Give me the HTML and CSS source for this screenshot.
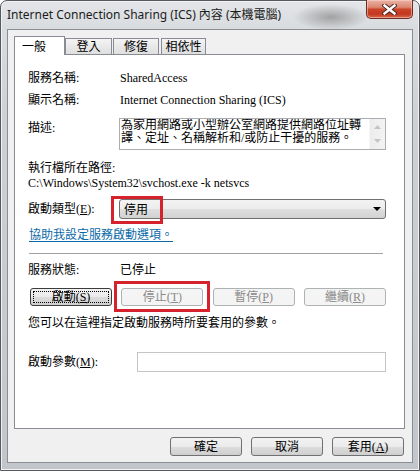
FILE: index.html
```html
<!DOCTYPE html>
<html lang="zh-Hant">
<head>
<meta charset="utf-8">
<title>Internet Connection Sharing (ICS) 內容</title>
<link rel="stylesheet" href="styles.css">
</head>
<body>
<div class="window">
  <div class="titlebar">
    <span class="title">Internet Connection Sharing (ICS) 內容 (本機電腦)</span>
    <div class="close">
      <svg width="15" height="11" viewBox="0 0 15 11"><path d="M2.5 1.5 L12.5 9.5 M12.5 1.5 L2.5 9.5" stroke="#4a2a22" stroke-width="4.4" stroke-linecap="square" fill="none"/><path d="M2.5 1.5 L12.5 9.5 M12.5 1.5 L2.5 9.5" stroke="#ffffff" stroke-width="2.4" stroke-linecap="square" fill="none"/></svg>
    </div>
  </div>
  <div class="client">
    <div class="tabs">
      <div class="tab active">一般</div>
      <div class="tab t2">登入</div>
      <div class="tab t3">修復</div>
      <div class="tab t4">相依性</div>
    </div>
    <div class="panel">
      <div class="row r1"><span class="label">服務名稱:</span><span class="val">SharedAccess</span></div>
      <div class="row r2"><span class="label">顯示名稱:</span><span class="val">Internet Connection Sharing (ICS)</span></div>
      <div class="row r3">
        <span class="label desc-label">描述:</span>
        <div class="desc">
          <div class="desc-text">為家用網路或小型辦公室網路提供網路位址轉<br>譯、定址、名稱解析和/或防止干擾的服務。</div>
          <div class="scroll">
            <svg width="7" height="4" viewBox="0 0 7 4"><path d="M0 4 L3.5 0 L7 4 Z" fill="#c4c4c4"/></svg>
            <svg width="7" height="4" viewBox="0 0 7 4"><path d="M0 0 L3.5 4 L7 0 Z" fill="#c4c4c4"/></svg>
          </div>
        </div>
      </div>
      <div class="line exec">執行檔所在路徑:</div>
      <div class="line path">C:\Windows\System32\svchost.exe -k netsvcs</div>
      <div class="row r6">
        <span class="label">啟動類型(<u>E</u>):</span>
        <div class="select"><span>停用</span><svg width="8" height="4" viewBox="0 0 8 4"><path d="M0 0 L8 0 L4 4 Z" fill="#000"/></svg></div>
      </div>
      <div class="line link">協助我設定服務啟動選項。</div>
      <div class="sep"></div>
      <div class="row r8"><span class="label">服務狀態:</span><span class="val">已停止</span></div>
      <div class="btnrow">
        <div class="btn focus"><span class="inner">啟動(<u>S</u>)</span></div>
        <div class="btn disabled">停止(<u>T</u>)</div>
        <div class="btn disabled">暫停(<u>P</u>)</div>
        <div class="btn disabled">繼續(<u>R</u>)</div>
      </div>
      <div class="line hint">您可以在這裡指定啟動服務時所要套用的參數。</div>
      <div class="row r11"><span class="label plabel">啟動參數(<u>M</u>):</span><div class="input"></div></div>
      <div class="mark mark1"></div>
      <div class="mark mark2"></div>
    </div>
    <div class="footer">
      <div class="btn">確定</div>
      <div class="btn">取消</div>
      <div class="btn">套用(<u>A</u>)</div>
    </div>
  </div>
</div>
</body>
</html>
```
FILE: styles.css
```css
* { box-sizing: border-box; }
html, body { margin: 0; padding: 0; }
body {
  width: 420px;
  height: 471px;
  overflow: hidden;
  background: #ffffff;
  font-family: "Liberation Serif", "Noto Sans CJK TC", serif;
  font-size: 12px;
  color: #000;
}
u { text-decoration: underline; text-underline-offset: 1px; }

.window {
  width: 420px;
  height: 471px;
  border: 1px solid #55595e;
  border-radius: 7px 7px 0 0;
  background:
    radial-gradient(ellipse 38px 13px at 330px 16px, rgba(110,110,110,0.55), rgba(110,110,110,0) 100%),
    linear-gradient(180deg, #e3e5e8 0px, #d9dcdf 28px, #cdd0d4 120px, #c2c5c9 100%);
  box-shadow: inset 0 0 0 1px #f1f2f4;
  padding: 0 6px 7px 6px;
  display: flex;
  flex-direction: column;
}

.titlebar {
  height: 28px;
  display: flex;
  align-items: flex-start;
  justify-content: space-between;
}
.title {
  font-family: "Noto Sans", "Noto Sans CJK TC", sans-serif;
  font-size: 12px;
  line-height: 28px;
  color: #1c1c1c;
}
.close {
  width: 47px;
  height: 19px;
  margin-top: -1px;
  border: 1px solid #6b2d22;
  border-top: none;
  border-radius: 0 0 5px 5px;
  background: linear-gradient(180deg, #eab3a6 0%, #dd8670 40%, #c9442a 52%, #c3381e 78%, #d7694c 100%);
  box-shadow: inset 0 0 0 1px rgba(255,220,210,0.5);
  display: flex;
  align-items: center;
  justify-content: center;
}

.client {
  flex: 1;
  background: #f0f0f0;
  border: 1px solid #8a8d91;
  padding: 6px 7px 0 6px;
  display: flex;
  flex-direction: column;
}

.tabs {
  display: flex;
  align-items: flex-start;
  height: 19px;
  margin-bottom: -1px;
}
.tab {
  height: 16px;
  margin-top: 2px;
  border: 1px solid #898c95;
  border-bottom: none;
  background: linear-gradient(180deg, #f4f4f4 0%, #e9e9e9 50%, #dfdfdf 100%);
  text-align: center;
  padding-top: 1px;
  line-height: 14px;
}
.tab.active {
  width: 51px;
  height: 19px;
  margin-top: 0;
  background: #fff;
  position: relative;
  z-index: 2;
  text-align: left;
  padding: 2px 0 0 7px;
  line-height: 16px;
}
.t2 { width: 47px; }
.t3 { width: 46px; margin-left: 1px; }
.t4 { width: 45px; margin-left: 2px; }

.panel {
  height: 375px;
  border: 1px solid #898c95;
  background: #fff;
  position: relative;
  padding: 0 18px 0 13px;
  display: flex;
  flex-direction: column;
}

.row { display: flex; align-items: center; }
.label { width: 91px; flex: none; line-height: 16px; }
.val { padding-left: 1px; line-height: 16px; }
.line { line-height: 16px; }

.r1 { margin-top: 15px; height: 16px; }
.r2 { margin-top: 6px; height: 16px; }
.r3 { margin-top: 10px; align-items: flex-start; }
.desc-label { padding-top: 2px; }
.desc {
  flex: 1;
  height: 32px;
  border: 1px solid #abadb3;
  display: flex;
  overflow: hidden;
}
.desc-text {
  flex: 1;
  line-height: 13px;
  padding: 0 0 0 1px;
  white-space: nowrap;
  overflow: hidden;
}
.scroll {
  width: 16px;
  background: linear-gradient(90deg, #ececec, #f3f3f3);
  border-left: 1px solid #f6f6f6;
  display: flex;
  flex-direction: column;
  align-items: center;
  justify-content: space-between;
  padding: 6px 0 6px;
}

.exec { margin-top: 11px; line-height: 15px; }
.path { line-height: 15px; }

.r6 { margin-top: 8px; height: 20px; }
.select {
  flex: 1;
  height: 20px;
  border: 1px solid #707070;
  border-radius: 3px;
  background: linear-gradient(180deg, #f3f3f3 0%, #ececec 50%, #dedede 51%, #d2d2d2 100%);
  display: flex;
  align-items: center;
  justify-content: space-between;
  padding: 0 4px 0 4px;
}

.link {
  margin-top: 8px;
  color: #0b6aa8;
  text-decoration: underline;
  text-underline-offset: 2px;
  align-self: flex-start;
  margin-left: 1px;
}
.sep {
  margin-top: 10px;
  height: 1px;
  background: #a0a0a0;
  margin-right: 3px;
  margin-left: 1px;
}
.r8 { margin-top: 8px; height: 16px; }

.btnrow {
  margin-top: 10px;
  margin-left: 2px;
  display: flex;
  justify-content: space-between;
}
.btn {
  width: 82px;
  height: 18px;
  border: 1px solid #707070;
  border-radius: 3px;
  background: linear-gradient(180deg, #f2f2f2 0%, #ebebeb 50%, #dddddd 51%, #cfcfcf 100%);
  display: flex;
  align-items: center;
  justify-content: center;
  line-height: 14px;
}
.btn.disabled {
  border-color: #adb2b5;
  background: #f4f4f4;
  color: #8a8a8a;
}
.btn.focus { border-color: #3c3c3c; padding: 2px; }
.btn.focus .inner {
  flex: 1;
  align-self: stretch;
  border: 1px dotted #000;
  display: flex;
  align-items: center;
  justify-content: center;
}

.hint { margin-top: 9px; }
.r11 { margin-top: 21px; height: 20px; }
.plabel { width: 109px; }
.input {
  flex: 1;
  height: 20px;
  border: 1px solid #c5c5c5;
  background: #fff;
}

.mark {
  position: absolute;
  border: 3px solid #d5222c;
}
.mark1 { left: 96px; top: 141px; width: 52px; height: 28px; }
.mark2 { left: 99px; top: 226px; width: 96px; height: 31px; }

.footer {
  margin-top: 8px;
  margin-right: 1px;
  display: flex;
  justify-content: flex-end;
  gap: 9px;
}
.footer .btn { width: 72px; height: 19px; }
```
